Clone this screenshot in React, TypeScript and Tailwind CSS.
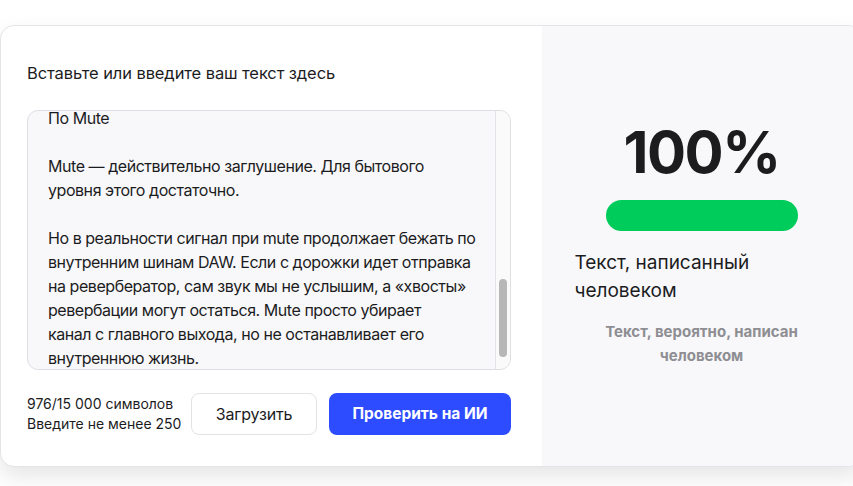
import React from "react";

export default function App() {
  const font = { fontFamily: "Inter, 'Noto Sans', sans-serif" };
  return (
    <div className="w-[853px] h-[486px] overflow-hidden bg-white pt-[25px]" style={font}>
      <div className="w-[862px] h-[442px] flex rounded-l-[14px] rounded-r-[14px] border border-[#e3e3e8] bg-white shadow-[0_10px_22px_rgba(0,0,0,0.10)] overflow-hidden">
        {/* Left column */}
        <div className="w-[541px] shrink-0 pl-[26px] pr-[31px] pt-[35px] flex flex-col">
          <h2 className="text-[16.5px] leading-[24px] text-[#1c1c1e] tracking-[-0.1px]">
            Вставьте или введите ваш текст здесь
          </h2>
          <div className="mt-[25px] h-[260px] flex rounded-[11px] border border-[#dedee3] bg-[#f8f8fa] overflow-hidden">
            <div className="flex-1 overflow-hidden pl-[20px] pr-[4px]">
              <div className="-mt-[5px] text-[16px] leading-[24px] text-[#1c1c1e] tracking-[-0.45px] whitespace-nowrap">
                <p>По Mute</p>
                <p className="h-[24px]"></p>
                <p>Mute — действительно заглушение. Для бытового<br />уровня этого достаточно.</p>
                <p className="h-[24px]"></p>
                <p>
                  Но в реальности сигнал при mute продолжает бежать по<br />
                  внутренним шинам DAW. Если с дорожки идет отправка<br />
                  на ревербератор, сам звук мы не услышим, а «хвосты»<br />
                  ревербации могут остаться. Mute просто убирает<br />
                  канал с главного выхода, но не останавливает его<br />
                  внутреннюю жизнь.
                </p>
              </div>
            </div>
            <div className="w-[15px] shrink-0 border-l border-[#e4e4e8] bg-[#fafafa] flex justify-center">
              <div className="mt-[168px] w-[8px] h-[78px] rounded-full bg-[#b7b7b7]"></div>
            </div>
          </div>
          <div className="mt-[23px] flex items-center justify-between">
            <div className="text-[14px] leading-[20px] text-[#1c1c1e] tracking-[0px]">
              <div>976/15 000 символов</div>
              <div>Введите не менее 250</div>
            </div>
            <div className="flex gap-3">
              <button className="w-[126px] h-[42px] rounded-[8px] border border-[#e2e2e7] bg-white text-[16px] text-[#1c1c1e] tracking-[-0.2px]">
                Загрузить
              </button>
              <button className="w-[182px] h-[42px] rounded-[8px] bg-[#2d4cff] text-[15.5px] font-bold text-white tracking-[0px]">
                Проверить на ИИ
              </button>
            </div>
          </div>
        </div>
        {/* Right column */}
        <div className="flex-1 bg-[#f8f8fa] flex flex-col items-center justify-center pb-[2px]">
          <div className="text-[58px] leading-[58px] font-bold text-[#1c1c1e] tracking-[-1.5px]">100%</div>
          <div className="mt-[19px] w-[192px] h-[31px] rounded-full bg-[#00cc5c]"></div>
          <div className="mt-[18px] w-[254px] text-[19px] leading-[28px] text-[#1c1c1e] tracking-[0px]">
            Текст, написанный
            <br />
            человеком
          </div>
          <div className="mt-[15px] text-center text-[15px] leading-[24px] font-bold text-[#8e8e93] tracking-[0px]">
            Текст, вероятно, написан
            <br />
            человеком
          </div>
        </div>
      </div>
    </div>
  );
}
